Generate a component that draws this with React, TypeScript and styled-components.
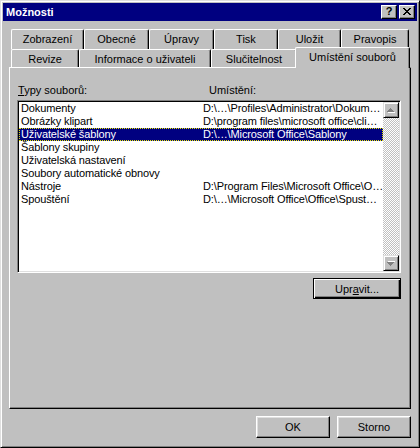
import styled, { createGlobalStyle } from "styled-components"

const colors = {
  face: "#c0c0c0",
  light: "#dfdfdf",
  white: "#ffffff",
  shadow: "#808080",
  dark: "#000000",
  navy: "#000080",
}

const GlobalStyle = createGlobalStyle`
  body {
    margin: 0;
    background: ${colors.face};
  }
  * {
    box-sizing: border-box;
  }
`

const Window = styled.div`
  width: 420px;
  height: 448px;
  background: ${colors.face};
  border: 1px solid;
  border-color: ${colors.light} ${colors.dark} ${colors.dark} ${colors.light};
  box-shadow: inset 1px 1px ${colors.white}, inset -1px -1px ${colors.shadow};
  padding: 2px;
  display: flex;
  flex-direction: column;
  font-family: "Liberation Sans", Arial, sans-serif;
  font-size: 11px;
  color: ${colors.dark};
`

const TitleBar = styled.div`
  height: 18px;
  background: ${colors.navy};
  display: flex;
  align-items: center;
  padding: 0 2px 0 3px;
`

const Title = styled.span`
  flex: 1;
  color: ${colors.white};
  font-weight: bold;
  font-size: 11px;
`

const TitleButtons = styled.div`
  display: flex;
  gap: 2px;
`

const TitleButton = styled.div`
  width: 16px;
  height: 14px;
  background: ${colors.face};
  border: 1px solid;
  border-color: ${colors.white} ${colors.dark} ${colors.dark} ${colors.white};
  box-shadow: inset -1px -1px ${colors.shadow};
  display: flex;
  align-items: center;
  justify-content: center;
  font-weight: bold;
  font-size: 11px;
  line-height: 1;
  padding-bottom: 1px;
`

const Body = styled.div`
  flex: 1;
  display: flex;
  flex-direction: column;
  padding: 8px 6px 0 6px;
`

const TabStrip = styled.div`
  height: 38px;
  padding-left: 2px;
  display: flex;
  flex-direction: column;
`

const TabRow = styled.div<{ $height: number }>`
  display: flex;
  height: ${(p) => p.$height}px;
`

const Tab = styled.div<{ $width: number; $selected?: boolean }>`
  width: ${(p) => p.$width + (p.$selected ? 4 : 0)}px;
  height: ${(p) => (p.$selected ? "calc(100% + 3px)" : "100%")};
  margin: ${(p) => (p.$selected ? "-2px -2px 0 -2px" : "0")};
  position: relative;
  z-index: ${(p) => (p.$selected ? 2 : 0)};
  background: ${colors.face};
  border-top: 1px solid ${colors.white};
  border-left: 1px solid ${colors.white};
  border-right: 1px solid ${colors.dark};
  border-radius: 2px 2px 0 0;
  box-shadow: inset -1px 0 ${colors.shadow};
  display: flex;
  justify-content: center;
  padding-top: 3px;
  white-space: nowrap;
`

const Panel = styled.div`
  width: 402px;
  height: 342px;
  position: relative;
  z-index: 1;
  border: 1px solid;
  border-color: ${colors.white} ${colors.dark} ${colors.dark} ${colors.white};
  box-shadow: inset -1px -1px ${colors.shadow};
  padding: 16px 0 0 7px;
  display: flex;
  flex-direction: column;
`

const PanelContent = styled.div`
  width: 384px;
  display: flex;
  flex-direction: column;
`

const LabelRow = styled.div`
  display: flex;
  height: 13px;
  line-height: 13px;
  padding-left: 1px;
`

const Label = styled.span<{ $width?: number }>`
  width: ${(p) => (p.$width ? `${p.$width}px` : "auto")};
`

const ListBox = styled.div`
  margin-top: 3px;
  height: 173px;
  background: ${colors.white};
  border: 1px solid;
  border-color: ${colors.shadow} ${colors.white} ${colors.white} ${colors.shadow};
  box-shadow: inset 1px 1px ${colors.dark}, inset -1px -1px ${colors.light};
  padding: 1px;
  display: flex;
`

const Rows = styled.div`
  flex: 1;
  display: flex;
  flex-direction: column;
  overflow: hidden;
`

const Row = styled.div<{ $selected?: boolean }>`
  display: flex;
  height: 13px;
  line-height: 13px;
  padding-left: 2px;
  letter-spacing: -0.12px;
  white-space: nowrap;
  background: ${(p) => (p.$selected ? colors.navy : "transparent")};
  color: ${(p) => (p.$selected ? colors.white : colors.dark)};
  outline: ${(p) => (p.$selected ? "1px dotted #e8e800" : "none")};
  outline-offset: -1px;
`

const NameCell = styled.span`
  width: 182px;
  flex-shrink: 0;
`

const PathCell = styled.span`
  flex: 1;
`

const ScrollBar = styled.div`
  width: 16px;
  display: flex;
  flex-direction: column;
  background: repeating-conic-gradient(${colors.white} 0 25%, ${colors.face} 0 50%) 0 0 / 2px 2px;
`

const ScrollButton = styled.div`
  width: 16px;
  height: 16px;
  background: ${colors.face};
  border: 1px solid;
  border-color: ${colors.light} ${colors.dark} ${colors.dark} ${colors.light};
  box-shadow: inset 1px 1px ${colors.white}, inset -1px -1px ${colors.shadow};
  display: flex;
  align-items: center;
  justify-content: center;
`

const ScrollTrack = styled.div`
  flex: 1;
`

const ActionRow = styled.div`
  display: flex;
  justify-content: flex-end;
  margin-top: 5px;
`

const Button = styled.button<{ $width: number; $height: number; $default?: boolean }>`
  width: ${(p) => p.$width}px;
  height: ${(p) => p.$height}px;
  background: ${colors.face};
  font: inherit;
  color: ${colors.dark};
  padding: 0;
  margin: 0;
  border: 1px solid;
  border-color: ${(p) =>
    p.$default
      ? colors.dark
      : `${colors.white} ${colors.dark} ${colors.dark} ${colors.white}`};
  box-shadow: ${(p) =>
    p.$default
      ? `inset 1px 1px ${colors.white}, inset -1px -1px ${colors.dark}, inset -2px -2px ${colors.shadow}`
      : `inset -1px -1px ${colors.shadow}, inset 1px 1px ${colors.light}`};
`

const DialogButtons = styled.div`
  display: flex;
  justify-content: flex-end;
  gap: 7px;
  margin-top: 7px;
`

const CloseGlyph = () => (
  <svg width="8" height="7" viewBox="0 0 8 7" shapeRendering="crispEdges">
    <path
      d="M0 0h2v1H0zM6 0h2v1H6zM1 1h2v1H1zM5 1h2v1H5zM2 2h4v1H2zM3 3h2v1H3zM2 4h4v1H2zM1 5h2v1H1zM5 5h2v1H5zM0 6h2v1H0zM6 6h2v1H6z"
      fill="#000"
    />
  </svg>
)

const Arrow = ({ down }: { down?: boolean }) => (
  <svg
    width="8"
    height="5"
    viewBox="0 0 8 5"
    shapeRendering="crispEdges"
    style={{ transform: down ? "scaleY(-1)" : undefined }}
  >
    <path d="M4 1h1v1H4zM3 2h3v1H3zM2 3h5v1H2zM1 4h7v1H1z" fill={colors.white} />
    <path d="M3 0h1v1H3zM2 1h3v1H2zM1 2h5v1H1zM0 3h7v1H0z" fill={colors.shadow} />
  </svg>
)

const topTabs = [
  { label: "Zobrazení", width: 73 },
  { label: "Obecné", width: 65 },
  { label: "Úpravy", width: 65 },
  { label: "Tisk", width: 64 },
  { label: "Uložit", width: 63 },
  { label: "Pravopis", width: 68 },
]

const frontTabs = [
  { label: "Revize", width: 68 },
  { label: "Informace o uživateli", width: 132 },
  { label: "Slučitelnost", width: 86 },
  { label: "Umístění souborů", width: 111, selected: true },
]

const fileTypes = [
  { name: "Dokumenty", path: "D:\\…\\Profiles\\Administrator\\Dokum…" },
  { name: "Obrázky klipart", path: "D:\\program files\\microsoft office\\cli…" },
  { name: "Uživatelské šablony", path: "D:\\…\\Microsoft Office\\Sablony", selected: true },
  { name: "Šablony skupiny", path: "" },
  { name: "Uživatelská nastavení", path: "" },
  { name: "Soubory automatické obnovy", path: "" },
  { name: "Nástroje", path: "D:\\Program Files\\Microsoft Office\\O…" },
  { name: "Spouštění", path: "D:\\…\\Microsoft Office\\Office\\Spust…" },
]

export default function App() {
  return (
    <>
      <GlobalStyle />
      <Window>
        <TitleBar>
          <Title>Možnosti</Title>
          <TitleButtons>
            <TitleButton>?</TitleButton>
            <TitleButton>
              <CloseGlyph />
            </TitleButton>
          </TitleButtons>
        </TitleBar>
        <Body>
          <TabStrip>
            <TabRow $height={20}>
              {topTabs.map((t) => (
                <Tab key={t.label} $width={t.width}>
                  {t.label}
                </Tab>
              ))}
            </TabRow>
            <TabRow $height={18}>
              {frontTabs.map((t) => (
                <Tab key={t.label} $width={t.width} $selected={t.selected}>
                  {t.label}
                </Tab>
              ))}
            </TabRow>
          </TabStrip>
          <Panel>
            <PanelContent>
              <LabelRow>
                <Label $width={191}>
                  <u>T</u>ypy souborů:
                </Label>
                <Label>Umístění:</Label>
              </LabelRow>
              <ListBox>
                <Rows>
                  {fileTypes.map((f) => (
                    <Row key={f.name} $selected={f.selected}>
                      <NameCell>{f.name}</NameCell>
                      <PathCell>{f.path}</PathCell>
                    </Row>
                  ))}
                </Rows>
                <ScrollBar>
                  <ScrollButton>
                    <Arrow />
                  </ScrollButton>
                  <ScrollTrack />
                  <ScrollButton>
                    <Arrow down />
                  </ScrollButton>
                </ScrollBar>
              </ListBox>
              <ActionRow>
                <Button $width={88} $height={21} $default>
                  Upr<u>a</u>vit...
                </Button>
              </ActionRow>
            </PanelContent>
          </Panel>
          <DialogButtons>
            <Button $width={74} $height={22}>
              OK
            </Button>
            <Button $width={74} $height={22}>
              Storno
            </Button>
          </DialogButtons>
        </Body>
      </Window>
    </>
  )
}
